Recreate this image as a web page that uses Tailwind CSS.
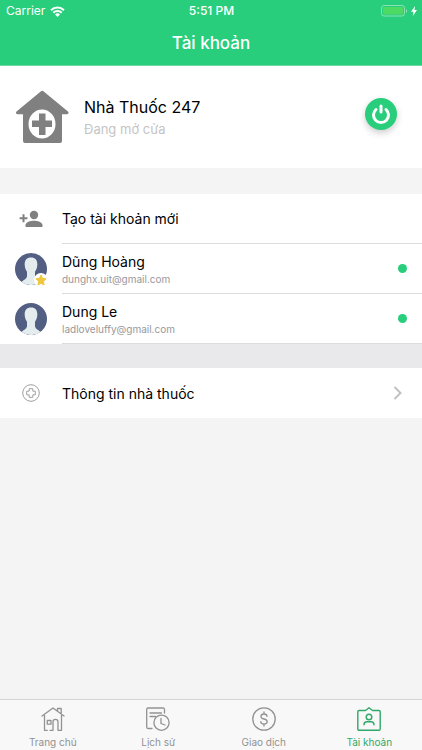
<!DOCTYPE html>
<html lang="vi">
  <head>
    <meta charset="UTF-8" />
    <meta name="viewport" content="width=device-width, initial-scale=1.0" />
    <script src="https://cdn.jsdelivr.net/npm/@tailwindcss/browser@4"></script>
    <title>Tài khoản</title>
  </head>
  <body class="min-h-screen flex flex-col bg-[#f4f4f4] text-black font-['Inter','Noto_Sans',sans-serif]">
    <header class="bg-[#28ce7c] text-white border-b border-[#6fd6a3]">
      <div class="grid grid-cols-3 items-center h-[22px] pl-[6px] pr-[5px] text-[12px]">
        <div class="flex items-center gap-[5px]">
          <span>Carrier</span>
          <svg class="w-[15px] h-[11px]" viewBox="0 0 15 11" fill="none" stroke="currentColor" stroke-width="2">
            <path d="M1 4.2a9.3 9.3 0 0 1 13 0" />
            <path d="M3.3 6.8a6 6 0 0 1 8.4 0" />
            <path d="M7.5 11 5 8.5a3.5 3.5 0 0 1 5 0z" fill="currentColor" stroke="none" />
          </svg>
        </div>
        <span class="text-center font-medium">5:51 PM</span>
        <div class="flex justify-end items-center gap-1">
          <svg class="w-[26px] h-[12px]" viewBox="0 0 26 12">
            <rect x=".5" y=".5" width="23" height="10.5" rx="2.5" fill="none" stroke="#86e2b4" />
            <rect x="2" y="2" width="20" height="7.5" rx="1" fill="#4cd964" />
            <path d="M25 4v4c1.3-.6 1.3-3.4 0-4z" fill="#86e2b4" />
          </svg>
          <svg class="w-[6px] h-[10px]" viewBox="0 0 6 10" fill="currentColor">
            <path d="M4 0 0 5.7h2.4L1.800 10 6 4H3.500z" />
          </svg>
        </div>
      </div>
      <h1 class="h-[43px] leading-[43px] text-center text-[17px] font-medium">Tài khoản</h1>
    </header>

    <main class="flex-1">
      <section class="flex items-center h-[102px] pl-[15px] pr-[25px] bg-white">
        <svg class="w-[54px] h-[54px]" viewBox="0 0 54 54">
          <path
            d="M26 1.200q1.200-.9 2.400 0L53 21.500q1.500 2.500-1 2.800H47V51q0 2-2 2H10q-2 0-2-2V24.300H2.500q-2.500-.3-1-2.800z"
            fill="#808080"
          />
          <ellipse cx="27" cy="34" rx="13.500" ry="14.500" fill="#fff" />
          <path d="M24 23.500h6.500V30.500H37v6.500h-6.500V45H24v-8h-7v-6.500h7z" fill="#808080" />
        </svg>
        <div class="flex-1 pl-[15px]">
          <h2 class="text-[16px] leading-6">Nhà Thuốc 247</h2>
          <p class="text-[13px] leading-5 text-[#c4c4c4]">Đang mở cửa</p>
        </div>
        <button
          type="button"
          aria-label="Đóng cửa"
          class="flex items-center justify-center size-[32px] mb-[6px] rounded-full bg-[#28ce7c] text-white shadow-[0_3px_7px_rgba(0,0,0,0.2)]"
        >
          <svg class="size-[22px]" viewBox="0 0 22 22" fill="none" stroke="currentColor" stroke-width="3" stroke-linecap="round">
            <path d="M11 3v6M6 6.500a7.500 7.500 0 1 0 10 0" />
          </svg>
        </button>
      </section>

      <ul class="mt-[26px] bg-white">
        <li>
          <a href="#" class="flex items-center h-[50px]">
            <span class="flex justify-center w-[62px]">
              <svg class="w-[24px] h-[18px]" viewBox="0 0 24 18" fill="#808080">
                <circle cx="15" cy="5" r="4.200" />
                <path d="M6.500 17v-1.800c0-3 5-4.400 8.500-4.400s8.500 1.400 8.500 4.400V17zM3.500 4.300h2V7.200h2.900v2H5.500v3h-2v-3H.6v-2h2.900z" />
              </svg>
            </span>
            <span class="flex-1 flex items-center h-full border-b border-[#dcdcde] text-[14px]">Tạo tài khoản mới</span>
          </a>
        </li>
        <li>
          <a href="#" class="flex items-center h-[50px]">
            <span class="flex justify-center w-[62px]">
              <span class="relative">
                <svg class="size-[32px]" viewBox="0 0 32 32">
                  <circle cx="16" cy="16" r="16" fill="#535f82" />
                  <path
                    d="M16 4.500c4.500 0 6.600 3 6.300 7.500-.2 3-1 5-2.300 6.700v4.800c.8 2.600 3.300 3.400 5.500 5.400A16 16 0 0 1 6.500 28.900c2.200-2 4.700-2.800 5.500-5.400v-4.800c-1.300-1.700-2.100-3.700-2.300-6.700-.3-4.500 1.800-7.500 6.300-7.500z"
                    fill="#e4ecee"
                  />
                </svg>
                <svg class="absolute -right-px -bottom-[2px] size-[14px]" viewBox="0 0 14 14">
                  <circle cx="7" cy="7" r="7" fill="#fff" />
                  <path
                    d="m7 2 1.500 3.300 3.600.5-2.700 2.500.7 3.600L7 10.200l-3.100 1.700.7-3.600-2.700-2.500 3.600-.5z"
                    fill="#f0c63c"
                    stroke="#f0c63c"
                    stroke-linejoin="round"
                  />
                </svg>
              </span>
            </span>
            <span class="flex-1 flex items-center h-full pr-[15px] border-b border-[#dcdcde]">
              <span class="flex-1 flex flex-col">
                <span class="text-[14px] leading-[20px]">Dũng Hoàng</span>
                <span class="text-[10px] leading-[14px] text-[#98989c]">dunghx.uit@gmail.com</span>
              </span>
              <span class="size-[9px] rounded-full bg-[#28ce7c]"></span>
            </span>
          </a>
        </li>
        <li>
          <a href="#" class="flex items-center h-[50px]">
            <span class="flex justify-center w-[62px]">
              <svg class="size-[32px]" viewBox="0 0 32 32">
                <circle cx="16" cy="16" r="16" fill="#535f82" />
                <path
                  d="M16 4.500c4.500 0 6.600 3 6.300 7.500-.2 3-1 5-2.300 6.700v4.800c.8 2.600 3.300 3.400 5.500 5.400A16 16 0 0 1 6.500 28.900c2.200-2 4.700-2.800 5.500-5.400v-4.800c-1.300-1.700-2.100-3.700-2.300-6.700-.3-4.500 1.800-7.500 6.300-7.500z"
                  fill="#e4ecee"
                />
              </svg>
            </span>
            <span class="flex-1 flex items-center h-full pr-[15px] border-b border-[#dcdcde]">
              <span class="flex-1 flex flex-col">
                <span class="text-[14px] leading-[20px]">Dung Le</span>
                <span class="text-[10px] leading-[14px] text-[#98989c]">ladloveluffy@gmail.com</span>
              </span>
              <span class="size-[9px] rounded-full bg-[#28ce7c]"></span>
            </span>
          </a>
        </li>
      </ul>

      <div class="pt-[24px] bg-[#e9e9eb]">
        <a href="#" class="flex items-center h-[50px] pr-[20px] bg-white">
          <span class="flex justify-center w-[62px]">
            <svg class="size-[18px]" viewBox="0 0 18 18" fill="none" stroke="#a0a0a0">
              <circle cx="9" cy="9" r="8.300" />
              <path d="M7.200 4.700h3.600v2.500h2.500v3.600h-2.500v2.500H7.200v-2.500H4.700V7.200h2.500z" stroke-linejoin="round" />
            </svg>
          </span>
          <span class="flex-1 text-[14px]">Thông tin nhà thuốc</span>
          <svg class="w-[9px] h-[14px]" viewBox="0 0 9 14" fill="none" stroke="#c0c0c5" stroke-width="2">
            <path d="m1.500 1 6 6-6 6" />
          </svg>
        </a>
      </div>
    </main>

    <nav class="sticky bottom-0 grid grid-cols-4 h-[51px] pt-[7px] border-t border-[#d4d4d4] bg-[#f8f8f8] text-[10px] leading-[14px] text-[#929292]">
      <a href="#" class="flex flex-col items-center gap-[4px]">
        <svg class="size-[24px]" viewBox="0 0 24 24" fill="none" stroke="currentColor" stroke-width="1.300" stroke-linejoin="round" stroke-linecap="round">
          <path d="M1 9 12 1l11 8M3.500 8v15.300h2.800M16.500 4V1.500h3.700V6M20.500 8v15.300h-3.500v-8.500a2.500 2.500 0 0 0-5 0v8.500H9M6.300 13.500h3.700v3.700H6.300z" />
        </svg>
        Trang chủ
      </a>
      <a href="#" class="flex flex-col items-center gap-[4px]">
        <svg class="size-[24px]" viewBox="0 0 24 24" fill="none" stroke="currentColor" stroke-width="1.300" stroke-linecap="round" stroke-linejoin="round">
          <path d="M18.500 6V2.500Q18.500 1 17 1H2Q.7 1 .7 2.500V20Q.7 21.500 2 21.500h4M4 6h11.500M4 9.500h5.500" />
          <circle cx="15.500" cy="15.700" r="7.600" />
          <path d="M15 11.500v5l4 1.500" />
        </svg>
        Lịch sử
      </a>
      <a href="#" class="flex flex-col items-center gap-[4px]">
        <svg class="size-[24px]" viewBox="0 0 24 24" fill="none" stroke="currentColor" stroke-width="1.300" stroke-linecap="round">
          <circle cx="12" cy="12" r="11.200" />
          <path d="M15 9.300c0-1.500-1.200-2.300-3-2.300s-3 .9-3 2.400 1.200 2.100 3 2.600 3.200 1 3.200 2.600-1.400 2.500-3.200 2.500-3.200-.9-3.200-2.500M12 5v2M12 17v2" />
        </svg>
        Giao dịch
      </a>
      <a href="#" aria-current="page" class="flex flex-col items-center gap-[4px] text-[#30a868]">
        <svg class="size-[24px]" viewBox="0 0 24 24" fill="none" stroke="currentColor" stroke-width="1.400" stroke-linecap="round" stroke-linejoin="round">
          <path d="M2 3.500h6.500L12 .8l3.500 2.700H22q1.200 0 1.200 1.200V22q0 1.200-1.200 1.200H2Q.8 23.200.8 22V4.700q0-1.200 1.200-1.200z" />
          <circle cx="12" cy="10" r="2.800" />
          <path d="M7 17.700q0-3 3-3h4q3 0 3 3" />
        </svg>
        Tài khoản
      </a>
    </nav>
  </body>
</html>
